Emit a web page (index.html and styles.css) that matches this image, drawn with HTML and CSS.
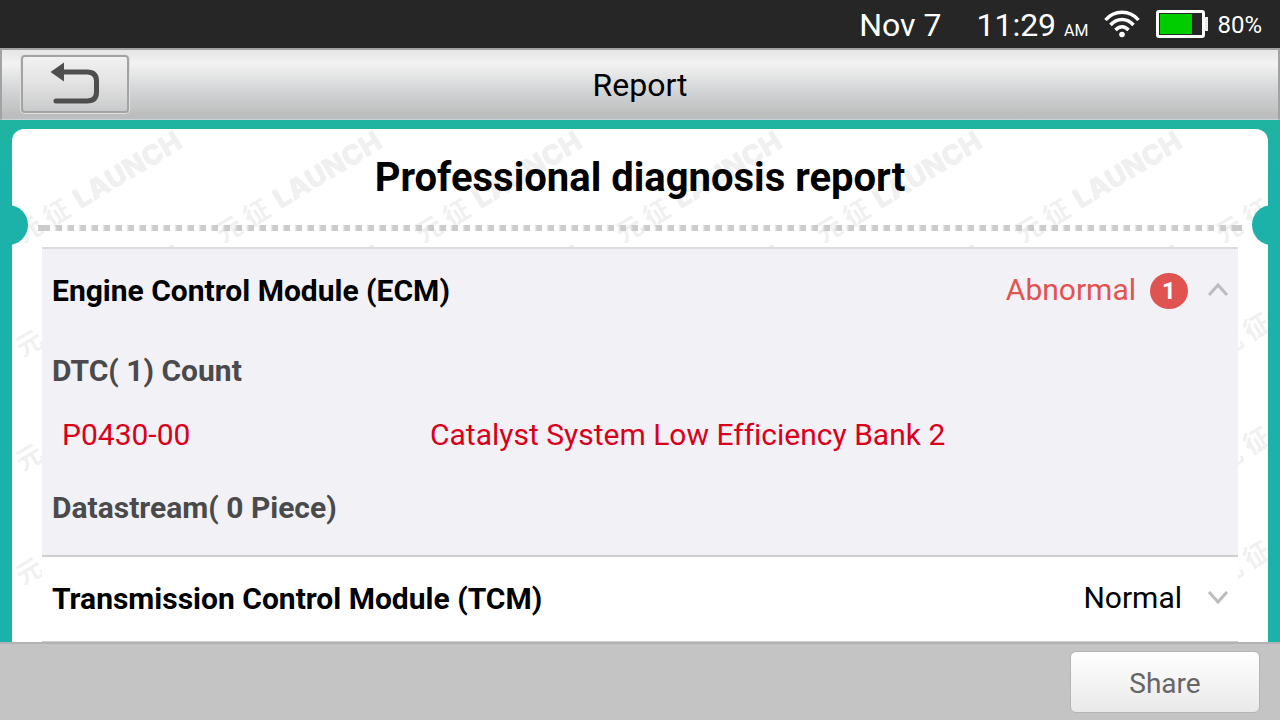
FILE: index.html
```
<!DOCTYPE html>
<html lang="en">
<head>
    <meta charset="UTF-8">
    <meta name="viewport" content="width=device-width, initial-scale=1.0">
    <title>Report</title>
    <link rel="stylesheet" href="styles.css">
</head>
<body>
    <div class="status-bar">
        <span class="date">Nov 7</span>
        <span class="time">11:29 <small>AM</small></span>
        <svg class="wifi" width="36" height="28" viewBox="0 0 36 28" fill="none" stroke="#fff" stroke-width="3.500">
            <path d="M1.500 10 C10 -0.500 26 -0.500 34.500 10"/>
            <path d="M6.500 15 C13 7.500 23 7.500 29.500 15"/>
            <path d="M11.500 20 C15.500 15.500 20.500 15.500 24.500 20"/>
            <circle cx="18" cy="24.500" r="2.800" fill="#fff" stroke="none"/>
        </svg>
        <svg class="battery" width="52" height="28" viewBox="0 0 52 28">
            <rect x="1.500" y="1.500" width="46" height="25" rx="1.500" fill="none" stroke="#fff" stroke-width="3"/>
            <rect x="49" y="7" width="3" height="14" fill="#eee"/>
            <rect x="4" y="4" width="32" height="20" fill="#00cd00"/>
        </svg>
        <span class="percent">80%</span>
    </div>

    <header class="toolbar">
        <button class="back" aria-label="Back">
            <svg width="50" height="44" viewBox="0 0 50 44">
                <path d="M14 10 H37 Q46.500 10 46.500 19 V30 Q46.500 39 37 39 H6" fill="none" stroke="#4e4e4e" stroke-width="5" stroke-linecap="round"/>
                <path d="M0.500 10 L14 0.500 V19.500 Z" fill="#4e4e4e"/>
            </svg>
        </button>
        <h1>Report</h1>
    </header>

    <main class="content">
        <div class="card">
            <svg class="watermark" width="100%" height="100%" aria-hidden="true">
                <defs>
                    <pattern id="mark" width="200" height="114" patternUnits="userSpaceOnUse">
                        <g transform="translate(11 115) rotate(-31)">
                            <text class="mark-cjk" x="0" y="0">元</text>
                            <text class="mark-cjk" x="32" y="0">征</text>
                            <text class="mark-latin" x="67" y="0">LAUNCH</text>
                        </g>
                    </pattern>
                </defs>
                <rect width="100%" height="100%" fill="url(#mark)"/>
            </svg>

            <h2 class="title">Professional diagnosis report</h2>
            <div class="divider"></div>

            <div class="modules">
                <section class="module open">
                    <button class="module-head" aria-expanded="true">
                        <span class="name">Engine Control Module (ECM)</span>
                        <span class="state abnormal">Abnormal</span>
                        <span class="count">1</span>
                        <svg class="chevron" width="22" height="18" viewBox="0 0 22 18">
                            <path d="M2 13 L11 3 L20 13"/>
                        </svg>
                    </button>
                    <h3 class="dtc-title">DTC( 1) Count</h3>
                    <table class="dtc">
                        <tr>
                            <td class="code">P0430-00</td>
                            <td>Catalyst System Low Efficiency Bank 2</td>
                        </tr>
                    </table>
                    <h3 class="data-title">Datastream( 0 Piece)</h3>
                </section>

                <section class="module">
                    <button class="module-head" aria-expanded="false">
                        <span class="name">Transmission Control Module (TCM)</span>
                        <span class="state">Normal</span>
                        <svg class="chevron" width="22" height="18" viewBox="0 0 22 18">
                            <path d="M2 2 L11 12 L20 2"/>
                        </svg>
                    </button>
                </section>
            </div>
        </div>
    </main>

    <footer class="footer">
        <button class="share">Share</button>
    </footer>
</body>
</html>
```

FILE: styles.css
```
* {
    box-sizing: border-box;
}
body {
    margin: 0;
    height: 100vh;
    display: flex;
    flex-direction: column;
    font-family: Roboto, "Noto Sans CJK SC", sans-serif;
    font-size: 30px;
    font-variant-ligatures: none;
    color: #000;
    background: #1cb2aa;
}
h1, h2, h3 {
    margin: 0;
}
button {
    font: inherit;
    color: inherit;
    padding: 0;
    cursor: pointer;
}

/* status bar */
.status-bar {
    flex: none;
    height: 48px;
    padding-right: 18px;
    display: flex;
    align-items: center;
    justify-content: flex-end;
    background: #262626;
    color: #fff;
    font-size: 32px;
}
.date,
.time,
.percent {
    padding-top: 2px;
}
.time {
    margin-left: 35px;
}
.time small {
    font-size: 16px;
}
.wifi {
    margin-left: 16px;
}
.battery {
    margin: 0 9px 0 16px;
}
.percent {
    font-size: 24px;
}

/* toolbar */
.toolbar {
    flex: none;
    height: 72px;
    padding: 0 19px;
    display: grid;
    grid-template-columns: 108px 1fr 108px;
    align-items: center;
    background: linear-gradient(#e6e6e6, #f2f2f2 20%, #dedfe0 45%, #cfd0d1 65%, #bcbdbd 95%);
    border: 2px solid #a2a2a4;
    border-width: 2px 2px 1px;
    border-bottom-color: #c9d3d8;
}
.toolbar h1 {
    font-size: 32px;
    font-weight: 400;
    text-align: center;
}
.back {
    height: 58px;
    margin-bottom: 2px;
    display: flex;
    align-items: center;
    justify-content: center;
    border: 2px solid #a3a3a4;
    border-radius: 4px;
    background: linear-gradient(#f1f1f1, #e4e4e4 45%, #c9cacb);
    box-shadow: 0 0 0 1px #e0e0e0;
}

/* report */
.content {
    flex: 1;
    min-height: 0;
    overflow: hidden;
    padding: 9px 12px 0;
    background: linear-gradient(#1fb4a0, #1cb2aa 60px);
}
.card {
    position: relative;
    min-height: 100%;
    background: #fff;
    border-radius: 12px 12px 0 0;
}
.watermark {
    position: absolute;
    top: 0;
    left: 0;
}
.watermark text {
    fill: #f0f0f0;
}
.mark-cjk {
    font-family: "Noto Sans CJK SC", sans-serif;
    font-size: 26px;
    font-weight: 700;
}
.mark-latin {
    font-family: Inter, sans-serif;
    font-size: 28px;
    font-weight: 900;
}
.title {
    position: relative;
    height: 96px;
    line-height: 98px;
    font-size: 40px;
    text-align: center;
}
.divider {
    position: relative;
    height: 6px;
    margin: 0 26px;
    background:
        linear-gradient(#cbcbcb, #cbcbcb) left / 12px 100% no-repeat,
        linear-gradient(#cbcbcb, #cbcbcb) right / 10px 100% no-repeat,
        repeating-linear-gradient(90deg, transparent 0 4px, #cbcbcb 7px 12px);
}
.divider::before,
.divider::after {
    content: "";
    position: absolute;
    top: -20px;
    width: 40px;
    height: 40px;
    border-radius: 50%;
    background: #1cb2aa;
}
.divider::before {
    left: -50px;
}
.divider::after {
    right: -50px;
}
.modules {
    position: relative;
    margin: 16px 30px 0;
    border-top: 2px solid #dcdcdf;
}
.module {
    background: #fff;
    border-bottom: 2px solid #cecdd1;
}
.module.open {
    background: #f2f1f6;
}
.module-head {
    width: 100%;
    height: 84px;
    padding: 0 9px 0 10px;
    display: flex;
    align-items: center;
    background: none;
    border: 0;
}
.name {
    flex: 1;
    padding-bottom: 2px;
    text-align: left;
    font-weight: 700;
}
.state {
    padding-bottom: 4px;
}
.abnormal {
    color: #df5350;
}
.count {
    width: 38px;
    height: 36px;
    margin-left: 14px;
    margin-right: -6px;
    line-height: 36px;
    border-radius: 50%;
    background: #df5350;
    color: #fff;
    font-size: 24px;
    font-weight: 700;
    text-align: center;
}
.chevron {
    margin-left: 25px;
    fill: none;
    stroke: #bcbcbf;
    stroke-width: 3;
}
.dtc-title,
.data-title {
    padding: 0 10px;
    font-size: 30px;
    color: #4a4a4c;
}
.dtc-title {
    line-height: 76px;
}
.data-title {
    line-height: 94px;
}
.dtc {
    width: 100%;
    border-collapse: collapse;
    color: #d9001b;
}
.dtc td {
    height: 52px;
    padding: 0 20px 2px;
}
.dtc .code {
    width: 368px;
}

/* footer */
.footer {
    position: relative;
    flex: none;
    height: 78px;
    padding: 0 20px;
    display: flex;
    align-items: center;
    justify-content: flex-end;
    background: #c4c4c4;
    border-top: 2px solid #b2b2b2;
}
.share {
    width: 190px;
    height: 62px;
    padding-top: 2px;
    border: 1px solid #b5b5b5;
    border-radius: 6px;
    background: linear-gradient(#fff, #e9e9e9);
    color: #666;
    font-size: 28px;
}
```
